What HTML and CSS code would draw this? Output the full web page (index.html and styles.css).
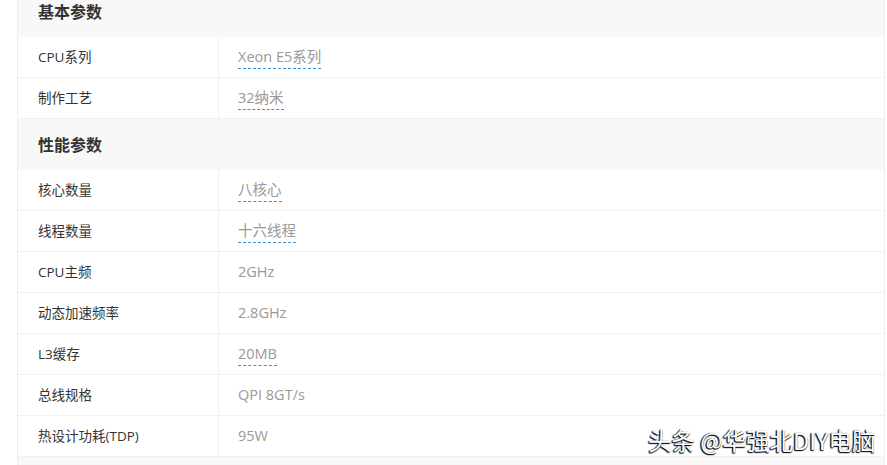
FILE: index.html
```html
<!DOCTYPE html>
<html lang="zh-CN">
<head>
  <meta charset="UTF-8">
  <title>参数</title>
  <link rel="stylesheet" href="styles.css">
</head>
<body>
  <div class="spec-table">
    <div class="group-title">基本参数</div>
    <div class="spec-row">
      <div class="spec-name">CPU系列</div>
      <div class="spec-value"><span class="link">Xeon E5系列</span></div>
    </div>
    <div class="spec-row">
      <div class="spec-name">制作工艺</div>
      <div class="spec-value"><span class="link">32纳米</span></div>
    </div>

    <div class="group-title">性能参数</div>
    <div class="spec-row">
      <div class="spec-name">核心数量</div>
      <div class="spec-value"><span class="link">八核心</span></div>
    </div>
    <div class="spec-row">
      <div class="spec-name">线程数量</div>
      <div class="spec-value"><span class="link">十六线程</span></div>
    </div>
    <div class="spec-row">
      <div class="spec-name">CPU主频</div>
      <div class="spec-value">2GHz</div>
    </div>
    <div class="spec-row">
      <div class="spec-name">动态加速频率</div>
      <div class="spec-value">2.8GHz</div>
    </div>
    <div class="spec-row">
      <div class="spec-name">L3缓存</div>
      <div class="spec-value"><span class="link">20MB</span></div>
    </div>
    <div class="spec-row">
      <div class="spec-name">总线规格</div>
      <div class="spec-value">QPI 8GT/s</div>
    </div>
    <div class="spec-row">
      <div class="spec-name">热设计功耗(TDP)</div>
      <div class="spec-value">95W</div>
    </div>
    <div class="group-title group-end"></div>
  </div>

  <div class="watermark">头条 @华强北DIY电脑</div>
</body>
</html>
```
FILE: styles.css
```css
body {
  margin: 0;
  background: #fff;
  font-family: "Open Sans", "Noto Sans CJK SC", sans-serif;
  height: 465px;
  overflow: hidden;
  position: relative;
}

.spec-table {
  margin: -14px 0 0 17px;
  width: 866px;
  border-left: 1px solid #eeeeee;
  border-right: 1px solid #eeeeee;
}

.group-title {
  height: 51px;
  line-height: 51px;
  padding-left: 20px;
  background: #f8f8f8;
  color: #333;
  font-size: 16px;
  font-weight: bold;
  font-family: "Noto Sans CJK SC", sans-serif;
}

.group-end {
  height: 9px;
}

.spec-row {
  display: flex;
  height: 40px;
  border-bottom: 1px solid #f1f1f1;
  font-size: 13.5px;
  line-height: 40px;
}

.spec-name {
  width: 180px;
  padding-left: 20px;
  color: #333;
  border-right: 1px solid #f1f1f1;
}

.spec-value {
  padding-left: 19px;
  color: #999;
  font-size: 14.5px;
}

.link {
  border-bottom: 1px dashed #3d8fd6;
  padding-bottom: 2px;
}

.watermark {
  position: absolute;
  left: 648px;
  top: 423px;
  font-family: "Noto Sans CJK SC", sans-serif;
  font-size: 23.5px;
  color: #fff;
  text-shadow: -1px 1px 1px #111, -1px 0 1px #222, 0 1px 1px #333;
}
```
